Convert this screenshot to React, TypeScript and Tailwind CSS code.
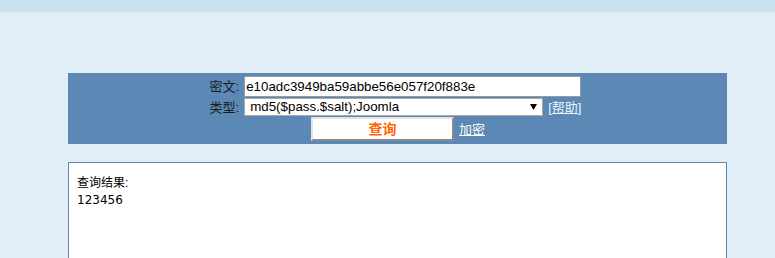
import { useState } from 'react';

const cjk = { fontFamily: '"Liberation Sans", "Noto Sans CJK SC", sans-serif' };

export default function App() {
  const [hash, setHash] = useState('e10adc3949ba59abbe56e057f20f883e');
  const [type, setType] = useState('md5($pass.$salt);Joomla');

  return (
    <div className="h-[258px] overflow-hidden bg-[#e1eef7]" style={cjk}>
      <div className="h-[12px] bg-[#cbe1ef]" />

      <div className="ml-[68px] mt-[61px] w-[659px] h-[71px] bg-[#5b88b4] pt-[3px] flex flex-col items-center">
        <div className="grid grid-cols-[auto_auto] grid-rows-[21px_18px] gap-y-[1px] -ml-[4px]">
          <label className="flex items-center justify-end pr-[5px] text-[13px] leading-none text-[#1a1a1a]">密文:</label>
          <input
            value={hash}
            onChange={(e) => setHash(e.target.value)}
            className="w-[337px] h-[21px] bg-white border border-[#999] px-[1px] text-[13.33px] leading-none text-black outline-none"
            style={{ fontFamily: '"Liberation Sans", Arial, sans-serif' }}
          />

          <label className="flex items-center justify-end pr-[5px] text-[13px] leading-none text-[#1a1a1a]">类型:</label>
          <div className="flex items-center h-[18px]">
            <div className="relative h-[18px]">
              <select
                value={type}
                onChange={(e) => setType(e.target.value)}
                className="appearance-none block w-[299px] h-[18px] bg-white border border-[#a9a9a9] pl-[5px] text-[13.33px] leading-[16px] text-black outline-none"
                style={{ fontFamily: '"Liberation Sans", Arial, sans-serif' }}
              >
                <option>md5($pass.$salt);Joomla</option>
                <option>md5</option>
                <option>sha1</option>
              </select>
              <svg className="absolute right-[6px] top-[6px] pointer-events-none" width="7" height="6" viewBox="0 0 7 6">
                <path d="M0 0h7L3.5 6z" fill="#000" />
              </svg>
            </div>
            <a href="#" className="ml-[5px] text-[13px] leading-none text-[#eef4fb] underline">[帮助]</a>
          </div>
        </div>

        <div className="flex items-center h-[24px] mt-[1px] ml-[1px]">
          <button
            className="w-[143px] h-[24px] bg-white border-2 border-t-[#e3e3e3] border-l-[#e3e3e3] border-b-[#8a8a8a] border-r-[#8a8a8a] text-[14px] leading-none font-bold text-[#ff6600]"
          >
            查询
          </button>
          <a href="#" className="ml-[5px] text-[13px] leading-none text-white underline">加密</a>
        </div>
      </div>

      <div className="ml-[68px] mt-[18px] w-[659px] h-[120px] bg-white border border-[#5b88b4] pl-[8px] pt-[12px] text-[12px] leading-[17px] text-black">
        <div>查询结果:</div>
        <div style={{ fontFamily: '"DejaVu Sans", "Noto Sans CJK SC", sans-serif' }}>123456</div>
      </div>
    </div>
  );
}
